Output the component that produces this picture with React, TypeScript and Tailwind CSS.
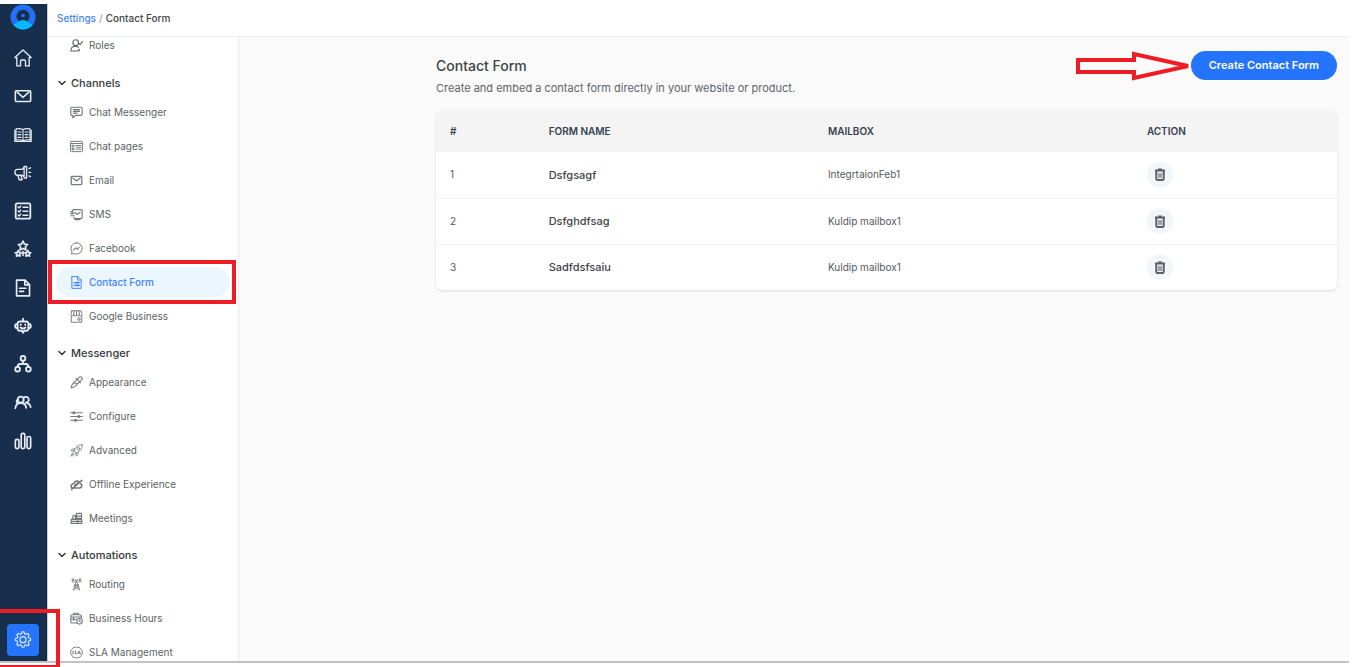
import React from 'react';
import { ChevronDown } from 'lucide-react';

interface NavItem {
  label: string;
  icon: React.ReactNode;
  active?: boolean;
}

interface IconProps {
  size?: number;
  width?: number;
  children: React.ReactNode;
}

const Icon: React.FC<IconProps> = ({ size = 13, width = 1.2, children }) => (
  <svg
    width={size}
    height={size}
    viewBox="0 0 16 16"
    fill="none"
    stroke="currentColor"
    strokeWidth={width}
    strokeLinecap="round"
    strokeLinejoin="round"
    className="shrink-0"
    aria-hidden="true"
  >
    {children}
  </svg>
);

const RAIL_ITEMS: NavItem[] = [
  {
    label: 'Home',
    icon: (
      <Icon size={18}>
        <path d="M.8 7.6 8 .8l7.2 6.8h-1.7V15h-3.3v-4.2a1 1 0 0 0-1-1H6.8a1 1 0 0 0-1 1V15H2.5V7.6Z" />
      </Icon>
    ),
  },
  {
    label: 'Inbox',
    icon: (
      <Icon size={18} width={1.4}>
        <rect x="1.2" y="3.3" width="13.6" height="9.6" rx=".8" />
        <path d="m2.8 4.5 5.2 4.7 5.2-4.7" />
      </Icon>
    ),
  },
  {
    label: 'Knowledge base',
    icon: (
      <Icon size={18} width={1}>
        <path d="M8 3.2C6.5 2.4 4 2.2 1.8 2.6v10c2-.4 4.7-.2 6.2.5 1.5-.7 4.2-.9 6.2-.5v-10C12 2.2 9.5 2.4 8 3.2Zm0 0v10M.7 3.5v10.3h14.6V3.5" />
        <path d="M3.5 5.3h2.7M3.5 7.7h2.7m-2.7 2.4h2.7m3.6-4.8h2.7M9.8 7.7h2.7m-2.7 2.4h2.7" />
      </Icon>
    ),
  },
  {
    label: 'Campaigns',
    icon: (
      <Icon size={18}>
        <path d="M9 2.8v8.4L7.2 10H3A2.2 2.2 0 0 1 .8 7.8V7A2.2 2.2 0 0 1 3 4.8h4.2L9 2.8ZM9 2.2h2.2v10.2H9M3.4 10l1.2 4h2.6L6.2 10M13.3 4.1l1.3-.7m-1.3 4h1.5m-1.5 3.2 1.3.7" />
      </Icon>
    ),
  },
  {
    label: 'Tasks',
    icon: (
      <Icon size={18} width={1.6}>
        <rect x="1.5" y="1.2" width="13" height="13.6" rx="1.5" />
        <path strokeWidth="1.3" d="m3.7 4.4.8.8L6 3.7M3.7 8l.8.8L6 7.3m-2.3 4.3.8.8L6 10.9M8 4.6h4.3M8 8.2h4.3M8 11.8h4.3" />
      </Icon>
    ),
  },
  {
    label: 'Reviews',
    icon: (
      <Icon size={18} width={1.5}>
        <path d="m8 1 1.3 2.6 2.8.4-2 2 .5 2.8L8 7.5 5.4 8.8 5.9 6l-2-2 2.8-.4L8 1Z" />
        <path d="m3.8 9.3.8 1.7 1.9.3-1.4 1.3.3 1.8-1.6-.8-1.6.8.3-1.8-1.4-1.3L3 11l.8-1.7Zm8.4 0L13 11l1.9.3-1.4 1.3.3 1.8-1.6-.8-1.6.8.3-1.8-1.4-1.3 1.9-.3.8-1.7ZM8 10.2v3.4" />
      </Icon>
    ),
  },
  {
    label: 'Documents',
    icon: (
      <Icon size={18} width={1.5}>
        <path d="M2.3 1h7.5l4 4v10H2.3V1Zm7.3.2v4h4M5 8.2h5.5M5 11h3.5" />
      </Icon>
    ),
  },
  {
    label: 'Bots',
    icon: (
      <Icon size={18} width={1.6}>
        <path d="M8 1.5v2.2M3.2 5.7a2 2 0 0 1 2-1.7h5.6a2 2 0 0 1 2 1.7v4.6a2 2 0 0 1-2 1.9H9L8 14l-1-1.8H5.2a2 2 0 0 1-2-1.9V5.7ZM3 5.9C1.7 6.1 1 6.8 1 8s.7 2 2 2.1M13 5.9c1.3.2 2 .9 2 2.1s-.7 2-2 2.1M6 6.6v.6m4-.6v.6M5.7 9.3c1.3 1 3.3 1 4.6 0" />
      </Icon>
    ),
  },
  {
    label: 'Workflows',
    icon: (
      <Icon size={18} width={1.6}>
        <circle cx="8" cy="3" r="2.1" />
        <circle cx="3.2" cy="12.7" r="2.1" />
        <circle cx="12.8" cy="12.7" r="2.1" />
        <path d="M8 5.2V8M3.2 10.5C3.2 8.8 4 8 5.5 8h5c1.5 0 2.3.8 2.3 2.5" />
      </Icon>
    ),
  },
  {
    label: 'Contacts',
    icon: (
      <Icon size={18} width={1.6}>
        <circle cx="6" cy="5" r="2.6" />
        <path d="M1.2 12.7C1.5 9.5 3.2 8 6 8c3 0 4.5 1.5 4.9 4.4M8.7 3.3a2.6 2.6 0 1 1 1.6 4.4c2.6.3 4.1 1.6 4.5 4M2.8 8C2 7 2.2 5.700 3.300 5" />
      </Icon>
    ),
  },
  {
    label: 'Reports',
    icon: (
      <Icon size={18} width={1.5}>
        <rect x="1.2" y="6.5" width="3.2" height="8.3" rx="1.4" />
        <rect x="6.4" y="1.2" width="3.2" height="13.6" rx="1.4" />
        <rect x="11.6" y="4" width="3.2" height="10.8" rx="1.4" />
      </Icon>
    ),
  },
];

const SIDEBAR_SECTIONS: { title: string; items: NavItem[] }[] = [
  {
    title: 'Channels',
    items: [
      {
        label: 'Chat Messenger',
        icon: (
          <Icon width={1.4}>
            <path d="M2.5 1.5h11A1.5 1.5 0 0 1 15 3v7a1.5 1.5 0 0 1-1.5 1.5H7l-3.5 3v-3h-1A1.5 1.5 0 0 1 1 10V3a1.5 1.5 0 0 1 1.5-1.5ZM4.2 4.5h7.6M4.2 6.6h7.6M4.2 8.7h4.6" />
          </Icon>
        ),
      },
      {
        label: 'Chat pages',
        icon: (
          <Icon>
            <rect x=".7" y="1.7" width="14.6" height="12.6" rx="1" />
            <path d="M1 4.3h14M7.5 6.8h5.8M7.5 9h5.8m-5.8 2.3h5.8M3 6.5h2v2H3zM3 10.5h2V12H3z" />
          </Icon>
        ),
      },
      {
        label: 'Email',
        icon: (
          <Icon width={1.6}>
            <rect x="1.5" y="3" width="13" height="10" rx="1" />
            <path d="m3.5 5 4.500 3.500L12.500 5" />
          </Icon>
        ),
      },
      {
        label: 'SMS',
        icon: (
          <Icon width={1.4}>
            <path d="M3 6V3.5A1.5 1.5 0 0 1 4.5 2h9A1.5 1.5 0 0 1 15 3.5v8a1.5 1.5 0 0 1-1.5 1.5H6M5.500 5 9 8l3.500-3M.8 4.500H3M1 9.500h4M.8 7h3.700M4.500 11.800l2 2.500H12" />
          </Icon>
        ),
      },
      {
        label: 'Facebook',
        icon: (
          <Icon>
            <path d="M8 .9a7.1 7 0 1 1-3.2 13.3l-3 .8.7-3A7.1 7 0 0 1 8 .9Z" />
            <path d="m4.5 9.8 2.7-3L9 8.5l2.7-2-2.5 2.8-1.9-1.6-2.8 2.1Z" />
          </Icon>
        ),
      },
      {
        label: 'Contact Form',
        active: true,
        icon: (
          <Icon>
            <path d="M2.3.8h7.5l3.9 4v10.4H2.3V.8Zm7.2.2v4h4" />
            <path strokeWidth="1.4" d="M4.7 7.8h.2m1.7 0h4.8M4.7 9.8h.2m1.7 0h4.8m-6.7 2h.2m1.7 0h4.8" />
          </Icon>
        ),
      },
      {
        label: 'Google Business',
        icon: (
          <Icon>
            <path d="M2.3 1h11.4L15 5.5a1.7 1.7 0 0 1-3.5 0 1.7 1.7 0 0 1-3.5 0 1.7 1.7 0 0 1-3.5 0 1.7 1.7 0 0 1-3.5 0L2.3 1Zm-.8 6.5V15h13V7.5M5 1l-.5 4.5M8 1v4.5M11 1l.5 4.5M12.5 10a1.7 1.7 0 1 0 .3 1.7h-1.3" />
          </Icon>
        ),
      },
    ],
  },
  {
    title: 'Messenger',
    items: [
      {
        label: 'Appearance',
        icon: (
          <Icon width={1.3}>
            <path d="m7.5 3 5.5 5.5M9 4.3l2.2-2.6a2 2 0 0 1 3.1 3.1L11.7 7M8.5 4.5l-5.7 5.7-1.5 4.5 4.5-1.5 5.7-5.7M5 8.5l4.5.7" />
          </Icon>
        ),
      },
      {
        label: 'Configure',
        icon: (
          <Icon width={1.3}>
            <path d="M.8 3.5h2.7m2.5 0h9.2M.8 8h8.7M12 8h3.2M.8 12.5h4.7m2.5 0h7.2" />
            <circle cx="4.7" cy="3.5" r="1.2" fill="currentColor" />
            <circle cx="10.8" cy="8" r="1.2" fill="currentColor" />
            <circle cx="6.8" cy="12.5" r="1.2" fill="currentColor" />
          </Icon>
        ),
      },
      {
        label: 'Advanced',
        icon: (
          <Icon width={1.1}>
            <path d="M4.8 8.5C6.5 4 10 1 15.2.8c0 5.2-3.2 8.7-7.7 10.4L4.8 8.5ZM6 6.2 3.2 6 1 8.2l3.8.3M9.8 10l.2 2.8L7.8 15l-.3-3.8M4 10.5 1.5 13M6 12l-3 3M3.8 12.2 1 15" />
            <circle cx="10.3" cy="5.7" r="1.6" />
          </Icon>
        ),
      },
      {
        label: 'Offline Experience',
        icon: (
          <Icon width={2}>
            <path d="M5.5 12.3h6.7a2.7 2.7 0 0 0 .8-5.1M10.8 4.5C8.5 3 5.5 4.3 5 6.8 2.3 7 .9 9 1.5 10.8c.2.6.6 1 1.1 1.3M2 14 14.5 3M6 9.5l4.5-4" />
          </Icon>
        ),
      },
      {
        label: 'Meetings',
        icon: (
          <Icon width={1.5}>
            <path d="M3.5 8.5v-3A1.5 1.5 0 0 1 5 4h1.5v5M8 1.8h6.2v6H8v-6ZM8 5h6M1.5 9h8v5h-8V9Zm8 0h5v5h-5M1.5 11.5h13" />
          </Icon>
        ),
      },
    ],
  },
  {
    title: 'Automations',
    items: [
      {
        label: 'Routing',
        icon: (
          <Icon width={1.1}>
            <path d="M7.2 5h1.6L12 15M7.2 5 4 15M6 8.5h4M5.5 10.5l5 3.5m0-3.5-5 3.5M6.5 8.5l3.5 2M9.5 8.5 6 10.5M4.5 1v4M2.8 1v4M11.5 1v4M13.2 1v4M6.5 2v1.5M9.5 2v1.5M8 3v2" />
          </Icon>
        ),
      },
      {
        label: 'Business Hours',
        icon: (
          <Icon width={1.3}>
            <path d="M8 13.5H2.5A1.5 1.5 0 0 1 1 12V5a1.5 1.5 0 0 1 1.5-1.5h10A1.5 1.5 0 0 1 14 5v2M4.500 3.500v-2h6v2M.8 6.200h13.400M1.500 9h6.300M4.500 7v3" />
            <circle cx="11.8" cy="11.5" r="3.4" />
            <path d="M11.8 9.8v1.9h1.3" />
          </Icon>
        ),
      },
      {
        label: 'SLA Management',
        icon: (
          <Icon>
            <path d="m2.5 4.2 1.8-2.4 2.2.2L8 .8 9.5 2l2.2-.2 1.8 2.4M2.5 11.8l1.8 2.4 2.2-.2L8 15.2 9.5 14l2.2.2 1.8-2.4M1.5 5.2.6 8l.9 2.8M14.5 5.2l.9 2.8-.9 2.8" />
            <path d="M4.8 6.3c-2-.6-2.3 1.2-1 1.6 1.8.5 1 2.3-1 1.6M6.8 6v3.6h1.4M9.7 9.6 11.2 6l1.6 3.6M10.2 8.5h2" />
          </Icon>
        ),
      },
    ],
  },
];

const FORMS = [
  { id: 1, name: 'Dsfgsagf', mailbox: 'IntegrtaionFeb1' },
  { id: 2, name: 'Dsfghdfsag', mailbox: 'Kuldip mailbox1' },
  { id: 3, name: 'Sadfdsfsaiu', mailbox: 'Kuldip mailbox1' },
];

const Logo = () => (
  <svg width="26" height="26" viewBox="0 0 26 26" aria-hidden="true">
    <circle cx="13" cy="13" r="12.5" fill="#2370fb" />
    <circle cx="13" cy="12.3" r="6.6" fill="#172e4d" />
    <path d="M3 20.5c3-.3 5.5-4.5 10-4.5s7 4.2 10 4.5a12.5 12.5 0 0 1-20 0Z" fill="#04b9fd" />
    <circle cx="13" cy="11.5" r="1.8" fill="#2370fb" />
  </svg>
);

const Rail = () => (
  <nav aria-label="Main" className="flex w-12 shrink-0 flex-col items-center border-r border-[#c5ccd6] bg-[#172e4d] pr-px pb-[5px] text-[#e6ebf2]">
    <a href="#" aria-label="Dashboard" className="mb-[9px]">
      <Logo />
    </a>
    <div className="flex h-[421px] w-full flex-col justify-between">
      {RAIL_ITEMS.map((item) => (
        <a key={item.label} href="#" aria-label={item.label} className="flex h-[38px] items-center justify-center">
          {item.icon}
        </a>
      ))}
    </div>
    <div className="relative mt-auto">
      <a href="#" aria-label="Settings" className="flex size-8 items-center justify-center rounded bg-[#2474ff]">
        <Icon size={18} width={1}>
          <path d="m6.6 2.5.5-1.7h1.8l.5 1.7 1.2.5 1.6-.9 1.3 1.3-.9 1.6.5 1.2 1.7.5v1.8l-1.7.5-.5 1.2.9 1.6-1.3 1.3-1.6-.9-1.2.5-.5 1.7H7.1l-.5-1.7-1.2-.5-1.6.9-1.3-1.3.9-1.6-.5-1.2-1.7-.5V6.7l1.7-.5.5-1.2-.9-1.6 1.3-1.3 1.6.9 1.2-.5Z" />
          <circle cx="8" cy="7.7" r="2.7" />
        </Icon>
      </a>
      <span className="pointer-events-none absolute -top-[15px] -left-4 h-[60px] w-[69px] border-4 border-[#ee1c25]" />
    </div>
  </nav>
);

const SidebarLink: React.FC<{ item: NavItem }> = ({ item }) => (
  <li className="relative mb-1">
    <a
      href="#"
      className={`flex h-[30px] items-center gap-1.5 rounded-full pl-[14px] text-[10px] ${
        item.active ? 'bg-[#ecf6ff] font-medium text-[#3f85fa]' : 'text-[#5c5f63]'
      }`}
    >
      <span className={item.active ? 'text-[#3f85fa]' : 'text-[#75787c]'}>{item.icon}</span>
      {item.label}
    </a>
    {item.active && <span className="pointer-events-none absolute -inset-y-[7px] -right-1.5 -left-2 border-4 border-[#ee1c25]" />}
  </li>
);

const Sidebar = () => (
  <aside className="flex w-[191px] shrink-0 flex-col border-r border-[#e4ebf3] bg-white px-2">
    <a href="#" className="mb-[22px] flex h-4 shrink-0 items-center gap-1.5 pl-[14px] text-[10px] text-[#5c5f63]">
      <Icon width={1.3}>
        <circle cx="7" cy="4.5" r="3.5" />
        <path d="M1 14.8C1 10.800 3 9 6.500 9c1.500 0 3 .5 3.800 1.300M1 14.800h9.500c1.500 0 1.500-2 0-2.300M11 5.500 12.500 7l3-4" />
      </Icon>
      Roles
    </a>
    {SIDEBAR_SECTIONS.map((section) => (
      <section key={section.title} className="mb-2.5">
        <button type="button" className="flex h-4 items-center gap-[3px] text-[11px] font-medium text-[#35383c]">
          <ChevronDown size={12} strokeWidth={3} />
          {section.title}
        </button>
        <ul className="mt-1.5">
          {section.items.map((item) => (
            <SidebarLink key={item.label} item={item} />
          ))}
        </ul>
      </section>
    ))}
  </aside>
);

const TrashIcon = () => (
  <svg width="10" height="13" viewBox="0 0 10 13" fill="none" stroke="currentColor" strokeWidth="2" strokeLinejoin="round" aria-hidden="true">
    <path d="M0 2.5h10M3 1.5h4" />
    <path d="M1.3 3v7.700c0 .8.400 1.300 1.200 1.300h5c.8 0 1.200-.5 1.200-1.300V3" />
    <path strokeWidth="1.1" d="M4 5v5M6 5v5" />
  </svg>
);

const FormsTable = () => (
  <div className="overflow-hidden rounded-md bg-white shadow-sm">
    <table className="w-full table-fixed text-left text-[10px] text-[#55585c]">
      <thead className="bg-[#f4f4f4] text-[#354250]">
        <tr className="h-[42px]">
          <th className="w-[12.5%] pl-3.5 font-semibold">#</th>
          <th className="w-[31%] font-semibold">FORM NAME</th>
          <th className="w-[35.4%] font-semibold">MAILBOX</th>
          <th className="font-semibold">ACTION</th>
        </tr>
      </thead>
      <tbody>
        {FORMS.map((form) => (
          <tr key={form.id} className="h-[46px] border-b border-[#f2f3f4] last:border-0">
            <td className="pl-3.5">{form.id}</td>
            <td className="text-[11px] font-medium text-[#404347]">{form.name}</td>
            <td>{form.mailbox}</td>
            <td>
              <button type="button" aria-label={`Delete ${form.name}`} className="flex size-[26px] items-center justify-center rounded-full bg-[#f2f6fa] text-[#5c5f63]">
                <TrashIcon />
              </button>
            </td>
          </tr>
        ))}
      </tbody>
    </table>
  </div>
);

export default function App() {
  return (
    <div className="h-screen overflow-hidden bg-white pt-1 pb-1 font-['Inter','Liberation_Sans',sans-serif]">
      <div className="mr-2 flex h-full border-b-2 border-[#c2c2c2]">
        <Rail />
        <div className="flex min-w-0 flex-1 flex-col">
          <header className="flex h-[33px] shrink-0 items-center gap-[3px] border-b border-[#eeeff1] pb-1 pl-[9px] text-[10px] font-medium">
            <a href="#" className="text-[#3f85fa]">Settings</a>
            <span className="text-[#a0a4a8]">/</span>
            <span className="text-[#404347]">Contact Form</span>
          </header>
          <div className="flex min-h-0 flex-1">
            <Sidebar />
            <main className="min-w-0 flex-1 bg-[#fafafa] pt-[14px] pr-3 pl-[197px]">
              <div className="mb-3 flex items-start justify-between">
                <div className="pt-[3px]">
                  <h1 className="text-sm leading-6 font-medium text-[#404347]">Contact Form</h1>
                  <p className="text-[11px] leading-5 text-[#606368]">Create and embed a contact form directly in your website or product.</p>
                </div>
                <div className="relative">
                  <button type="button" className="h-[29px] rounded-full bg-[#2474ff] px-[18px] text-[11px] font-semibold text-white">
                    Create Contact Form
                  </button>
                  <svg width="117" height="30" viewBox="0 0 117 30" fill="none" stroke="#ee1c25" strokeWidth="4" className="pointer-events-none absolute top-0 right-full" aria-hidden="true">
                    <path d="M4 9h56V3l54 12-54 12v-6H4V9Z" />
                  </svg>
                </div>
              </div>
              <FormsTable />
            </main>
          </div>
        </div>
      </div>
    </div>
  );
}
